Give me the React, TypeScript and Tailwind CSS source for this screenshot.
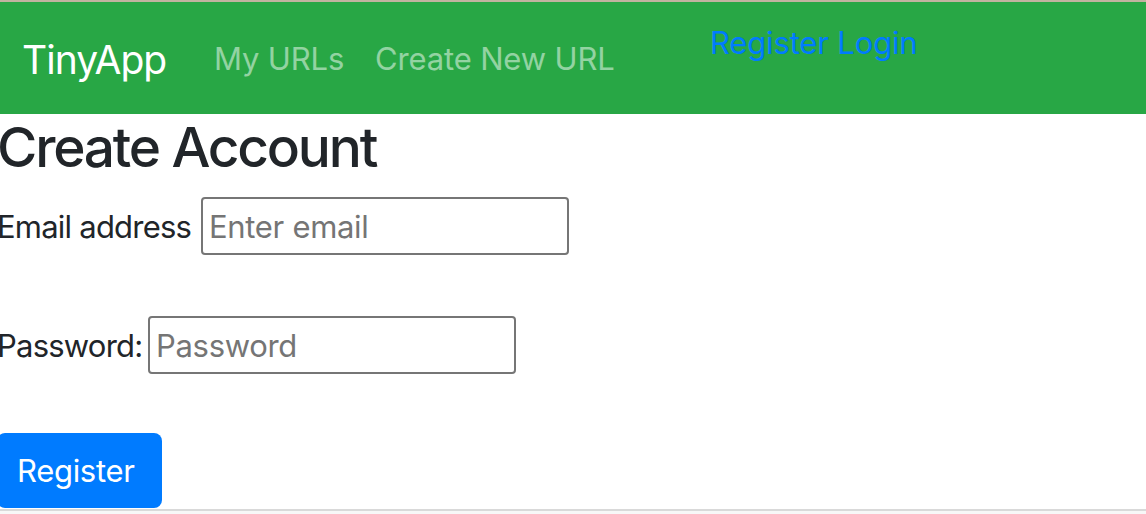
import React from "react";

export default function App() {
  return (
    <div className="w-[1146px] h-[514px] overflow-hidden bg-white flex flex-col font-['Inter',sans-serif] text-[#212529]">
      <div className="h-[2px] bg-[#c2b3a0] shrink-0" />
      <nav className="h-[112px] shrink-0 bg-[#28a745] flex items-start pl-[22px]">
        <a className="w-[192px] mt-[38px] text-[39px] leading-none tracking-[-0.025em] text-white">TinyApp</a>
        <a className="w-[161px] mt-[41px] text-[31px] leading-none tracking-[-0.005em] text-white/50">My URLs</a>
        <a className="w-[335px] mt-[41px] text-[31px] leading-none tracking-[-0.005em] text-white/50">Create New URL</a>
        <span className="mt-[25px] text-[31px] leading-none tracking-[-0.005em] text-[#007bff]">Register Login</span>
      </nav>
      <main className="flex flex-col ml-[-3px]">
        <h1 className="mt-[6px] text-[55px] leading-none font-medium tracking-[-0.04em]">Create Account</h1>
        <div className="mt-[22px] flex items-center">
          <label className="w-[204px] text-[31px] leading-none tracking-[-0.025em]">Email address</label>
          <input
            className="w-[368px] h-[58px] border-2 border-[#767676] rounded-[4px] px-[6px] text-[31px] tracking-[-0.01em] placeholder:text-[#757575] outline-none"
            placeholder="Enter email"
          />
        </div>
        <div className="mt-[61px] flex items-center">
          <label className="w-[151px] text-[31px] leading-none tracking-[-0.025em]">Password:</label>
          <input
            type="password"
            className="w-[368px] h-[58px] border-2 border-[#767676] rounded-[4px] px-[6px] text-[31px] tracking-[-0.01em] placeholder:text-[#757575] outline-none"
            placeholder="Password"
          />
        </div>
        <button className="mt-[59px] w-[165px] h-[75px] rounded-[8px] bg-[#007bff] text-white text-[31px] leading-none tracking-[-0.01em] flex items-center pl-[20px]">
          Register
        </button>
      </main>
      <div className="mt-auto h-[2px] bg-[#d9d9d9] shrink-0" />
      <div className="h-[3px] bg-[#f7f7f7] shrink-0" />
    </div>
  );
}
